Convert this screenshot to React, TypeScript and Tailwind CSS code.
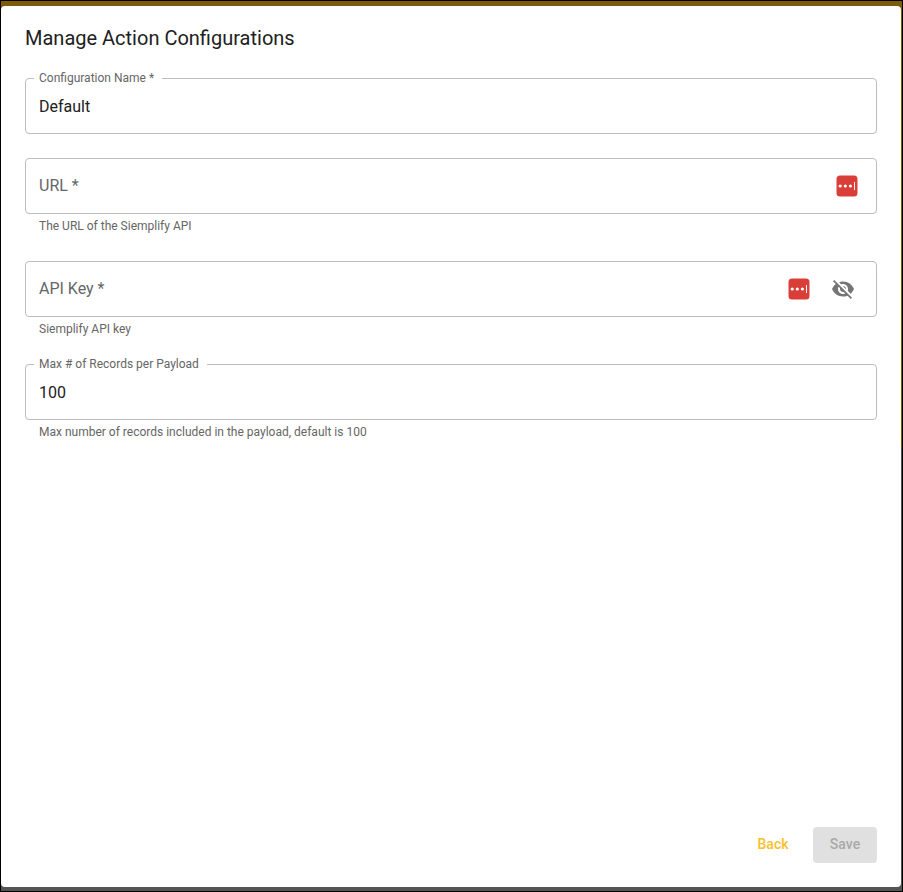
import React, { useState } from "react";
import { MdVisibility, MdVisibilityOff } from "react-icons/md";

type FieldProps = {
    id: string;
    label: string;
    initial?: string;
    hint?: string;
    type?: string;
    children?: React.ReactNode;
};

const PasswordManagerIcon: React.FC = () => {
    return (
        <svg
            className="h-[22px] w-[22px] shrink-0"
            viewBox="0 0 22 22"
            aria-hidden="true"
        >
            <rect x="0.5" y="0.5" width="21" height="21" rx="3.5" fill="#d93e39" />
            <circle cx="4.2" cy="11" r="1.6" fill="#fff" />
            <circle cx="9.3" cy="11" r="1.6" fill="#fff" />
            <circle cx="14.4" cy="11" r="1.6" fill="#fff" />
            <rect x="18" y="7" width="1" height="8" fill="#fff" />
        </svg>
    );
};

const Field: React.FC<FieldProps> = ({
    id,
    label,
    initial = "",
    hint,
    type = "text",
    children,
}) => {
    const [value, setValue] = useState(initial);
    const [focused, setFocused] = useState(false);
    const floating = focused || value !== "";

    return (
        <div>
            <div className="relative flex h-14 items-center rounded border border-[#bdbdbd]">
                <label
                    htmlFor={id}
                    className={
                        floating
                            ? "absolute -top-[9px] left-2 bg-white pr-2 pl-[5px] text-xs text-[#666]"
                            : "pointer-events-none absolute top-[15px] left-[13px] text-base text-[#666]"
                    }
                >
                    {label}
                </label>
                <input
                    id={id}
                    type={type}
                    value={value}
                    onChange={(e) => setValue(e.target.value)}
                    onFocus={() => setFocused(true)}
                    onBlur={() => setFocused(false)}
                    aria-describedby={hint ? `${id}-hint` : undefined}
                    className="h-full min-w-0 flex-1 bg-transparent px-[13px] text-base text-[#212121] outline-none"
                />
                {children}
            </div>
            {hint && (
                <p
                    id={`${id}-hint`}
                    className="h-[23px] px-[14px] pt-1 text-xs text-[#666]"
                >
                    {hint}
                </p>
            )}
        </div>
    );
};

const App: React.FC = () => {
    const [visible, setVisible] = useState(false);

    return (
        <div className="flex min-h-screen flex-col border border-black bg-linear-to-b from-[#7d5b08] from-50% to-[#555] to-50% pt-[5px] pr-px pb-1 font-[Roboto,sans-serif]">
            <form
                className="flex flex-1 flex-col rounded bg-white p-6 pt-4"
                onSubmit={(e) => e.preventDefault()}
            >
                <h1 className="text-xl leading-8 text-[#212121]">
                    Manage Action Configurations
                </h1>
                <div className="mt-6 flex flex-col gap-6">
                    <Field
                        id="name"
                        label="Configuration Name *"
                        initial="Default"
                    />
                    <Field
                        id="url"
                        label="URL *"
                        hint="The URL of the Siemplify API"
                    >
                        <div className="pr-[18px]">
                            <PasswordManagerIcon />
                        </div>
                    </Field>
                    <Field
                        id="api-key"
                        label="API Key *"
                        hint="Siemplify API key"
                        type={visible ? "text" : "password"}
                    >
                        <PasswordManagerIcon />
                        <button
                            type="button"
                            aria-label="Toggle visibility"
                            onClick={() => setVisible(!visible)}
                            className="mr-[9px] ml-[9px] flex h-12 w-12 items-center justify-center text-2xl text-[#757575]"
                        >
                            {visible ? <MdVisibility /> : <MdVisibilityOff />}
                        </button>
                    </Field>
                    <Field
                        id="max-records"
                        label="Max # of Records per Payload"
                        initial="100"
                        hint="Max number of records included in the payload, default is 100"
                    />
                </div>
                <div className="mt-auto flex justify-end gap-2 pt-6">
                    <button
                        type="button"
                        className="h-9 min-w-16 rounded px-4 pb-0.5 text-sm font-medium text-[#fbc02d]"
                    >
                        Back
                    </button>
                    <button
                        type="submit"
                        disabled
                        className="h-9 min-w-16 rounded bg-[#e0e0e0] px-4 pb-0.5 text-sm font-medium text-[#a9a9a9]"
                    >
                        Save
                    </button>
                </div>
            </form>
        </div>
    );
};

export default App;
